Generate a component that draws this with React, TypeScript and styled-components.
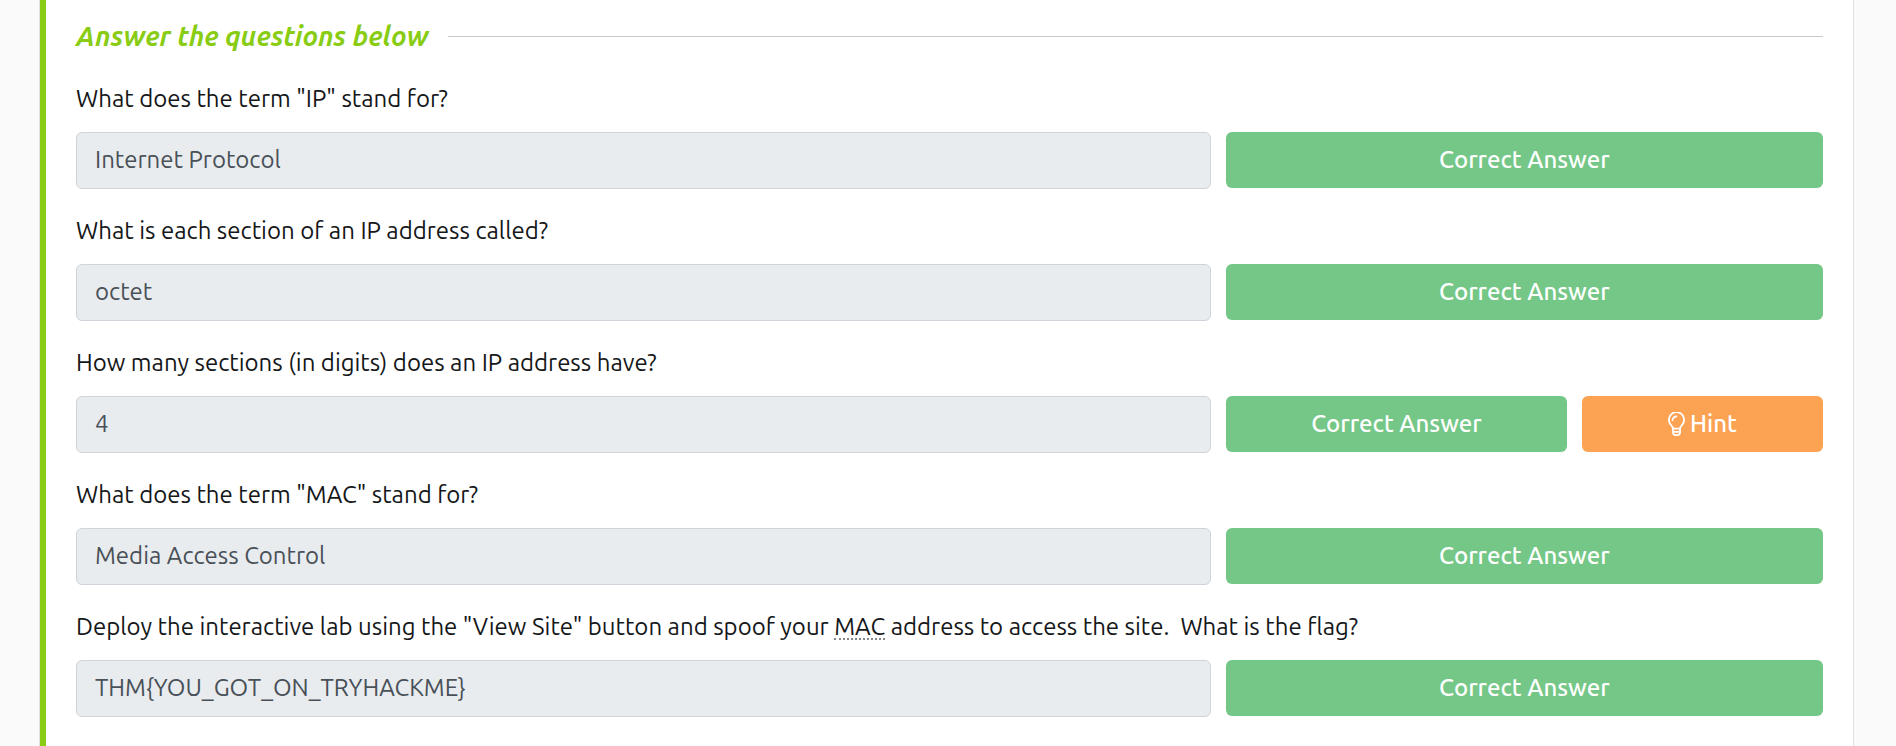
import React, { useId } from "react";
import styled, { createGlobalStyle } from "styled-components";

const GlobalStyle = createGlobalStyle`
  *, *::before, *::after { box-sizing: border-box; }
  body {
    margin: 0;
    background: #fafafa;
    color: #212529;
    font-family: Ubuntu, "Noto Sans", sans-serif;
    font-size: 24px;
    line-height: 36px;
  }
`;

const Page = styled.main`
  padding: 0 42px 0 39px;
`;

const Panel = styled.section`
  background: #fff;
  border: solid #dfdfdf;
  border-width: 0 1px;
`;

const Task = styled.div`
  border-left: 6px solid #88cc14;
  padding: 18px 30px 29px;
`;

const Header = styled.header`
  display: flex;
  align-items: center;
  gap: 20px;
  margin-bottom: 27px;

  &::after {
    content: "";
    flex: 1;
    border-top: 1px solid #c8c8c8;
  }
`;

const Title = styled.h2`
  margin: 0;
  color: #88cc14;
  font-size: 27px;
  font-style: italic;
  font-weight: 600;
  line-height: 36px;
`;

const Questions = styled.div`
  display: flex;
  flex-direction: column;
  gap: 24px;
`;

const Question = styled.form`
  display: flex;
  flex-direction: column;
  gap: 15px;
`;

const Label = styled.label`
  color: #151719;
  white-space: pre-wrap;
`;

const Term = styled.abbr`
  text-decoration: none;
  border-bottom: 2px dotted #888;
  line-height: 22px;
  display: inline-block;
`;

const Answer = styled.div`
  display: grid;
  grid-template-columns: minmax(0, 19fr) minmax(0, 10fr);
  gap: 15px;
  align-items: start;
`;

const Field = styled.input`
  width: 100%;
  height: 57px;
  padding: 0 18px 2px;
  border: 1px solid #ced4da;
  border-radius: 6px;
  background: #e8ecef;
  color: #495057;
  font: inherit;
`;

const Actions = styled.div<{ $split: boolean }>`
  display: grid;
  grid-template-columns: ${(p) => (p.$split ? "17fr 12fr" : "1fr")};
  gap: 15px;
`;

const Button = styled.button<{ $tone: "success" | "hint" }>`
  display: flex;
  align-items: center;
  justify-content: center;
  gap: 5px;
  height: 56px;
  padding: 0 18px;
  border: 0;
  border-radius: 6px;
  background: ${(p) => (p.$tone === "success" ? "#74c786" : "#fca253")};
  color: #fff;
  font: inherit;
  font-weight: 500;
`;

const BulbSvg = styled.svg`
  width: 17px;
  height: 24px;
  fill: none;
  stroke: currentColor;
  stroke-width: 1.8;
  stroke-linecap: round;
  stroke-linejoin: round;
`;

function Bulb() {
  return (
    <BulbSvg viewBox="0 0 17 24" aria-hidden="true">
      <path d="M5 16.6C4.7 14.6 3.6 13.7 2.5 12.4A7.6 7.6 0 1 1 14.5 12.4C13.4 13.7 12.3 14.6 12 16.6Z" />
      <path d="M4.5 8.3A3.9 3.9 0 0 1 8.4 4.5" />
      <path d="M5 16.6V21.4L6.6 23.1H10.4L12 21.4V16.6M5 19.8H12" />
    </BulbSvg>
  );
}

interface Item {
  question: React.ReactNode;
  answer: string;
  hint?: boolean;
}

const items: Item[] = [
  { question: 'What does the term "IP" stand for?', answer: "Internet Protocol" },
  { question: "What is each section of an IP address called?", answer: "octet" },
  { question: "How many sections (in digits) does an IP address have?", answer: "4", hint: true },
  { question: 'What does the term "MAC" stand for?', answer: "Media Access Control" },
  {
    question: (
      <>
        {'Deploy the interactive lab using the "View Site" button and spoof your '}
        <Term>MAC</Term>
        {" address to access the site.  What is the flag?"}
      </>
    ),
    answer: "THM{YOU_GOT_ON_TRYHACKME}",
  },
];

function QuestionRow({ question, answer, hint = false }: Item) {
  const id = useId();
  return (
    <Question>
      <Label htmlFor={id}>{question}</Label>
      <Answer>
        <Field id={id} type="text" value={answer} disabled readOnly />
        <Actions $split={hint}>
          <Button type="button" $tone="success">Correct Answer</Button>
          {hint && (
            <Button type="button" $tone="hint">
              <Bulb />
              Hint
            </Button>
          )}
        </Actions>
      </Answer>
    </Question>
  );
}

export default function App() {
  return (
    <>
      <GlobalStyle />
      <Page>
        <Panel>
          <Task>
            <Header>
              <Title>Answer the questions below</Title>
            </Header>
            <Questions>
              {items.map((item) => (
                <QuestionRow key={item.answer} {...item} />
              ))}
            </Questions>
          </Task>
        </Panel>
      </Page>
    </>
  );
}
